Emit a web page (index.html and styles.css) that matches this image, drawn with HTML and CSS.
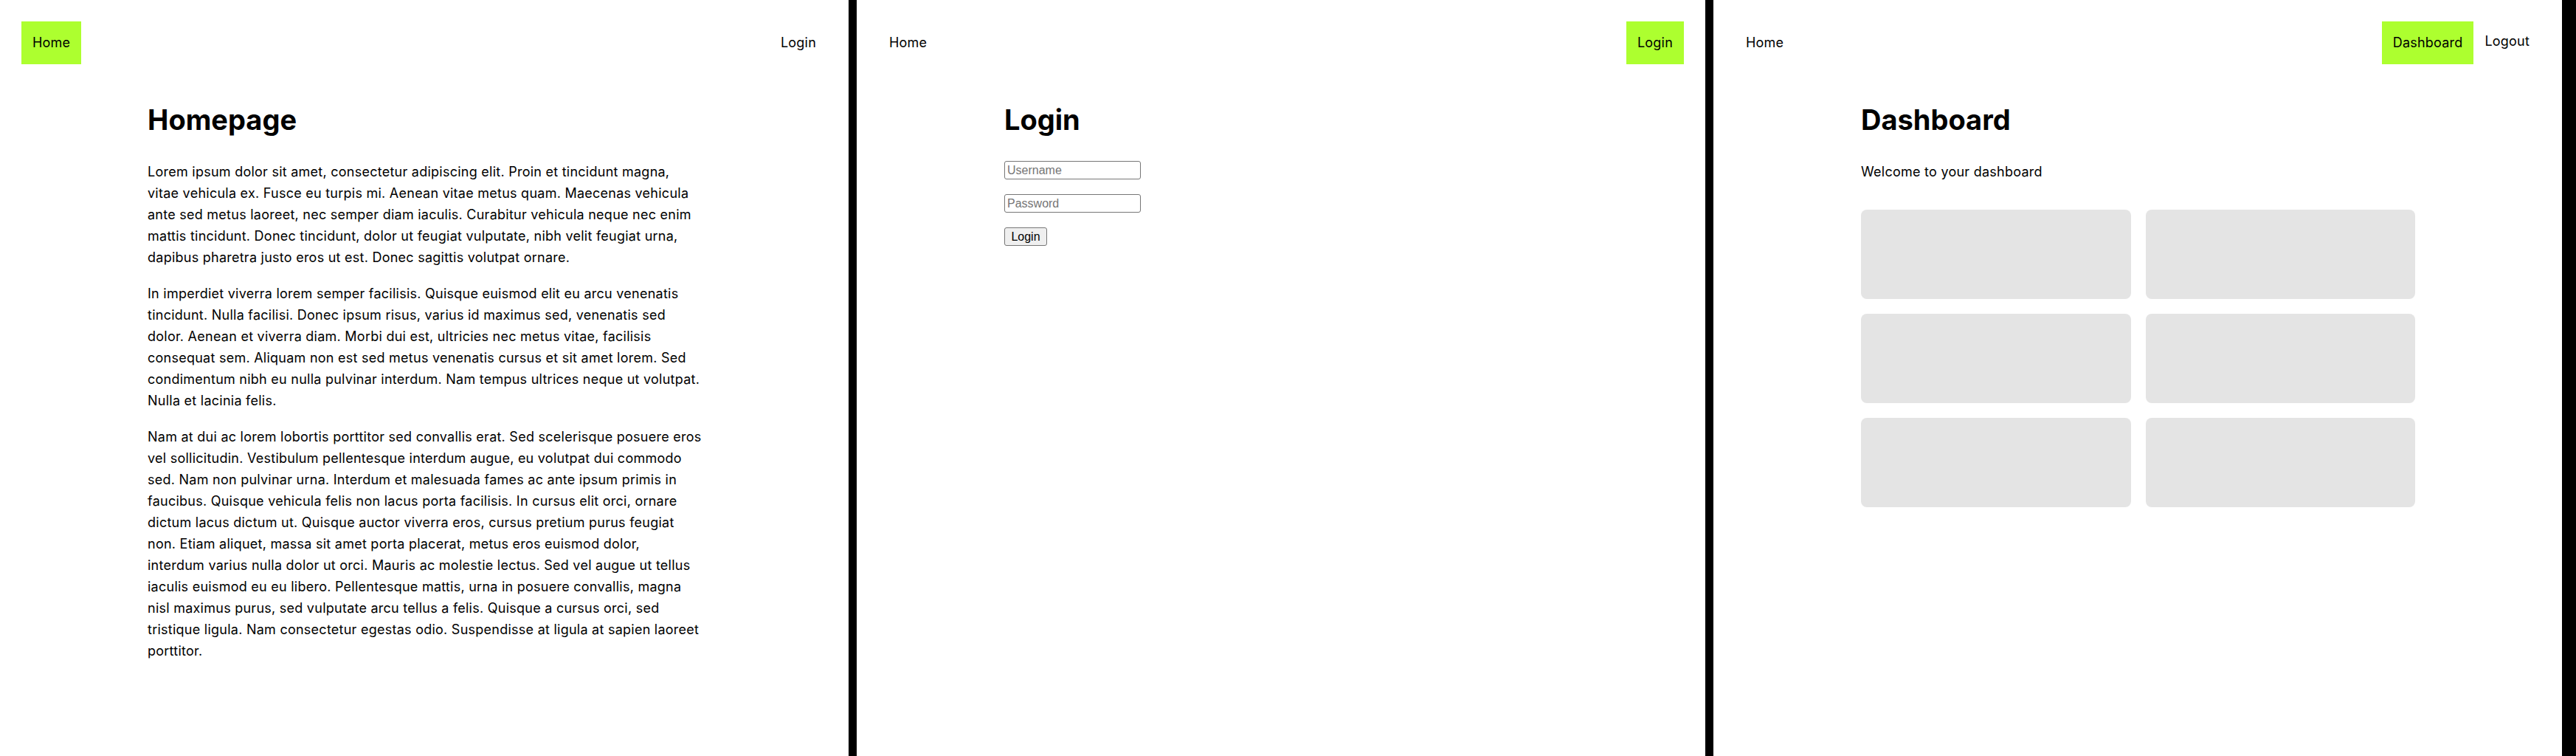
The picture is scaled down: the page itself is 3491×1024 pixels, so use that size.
FILE: index.html
```html
<!DOCTYPE html>
<html lang="en">
<head>
<meta charset="utf-8">
<title>Pages</title>
<link rel="stylesheet" href="styles.css">
</head>
<body>
  <section class="panel">
    <nav class="nav">
      <div class="nav-group"><a class="nav-link active" href="#">Home</a></div>
      <div class="nav-group"><a class="nav-link" href="#">Login</a></div>
    </nav>
    <main class="content">
      <h1 class="title">Homepage</h1>
      <p class="text">Lorem ipsum dolor sit amet, consectetur adipiscing elit. Proin et tincidunt magna, vitae vehicula ex. Fusce eu turpis mi. Aenean vitae metus quam. Maecenas vehicula ante sed metus laoreet, nec semper diam iaculis. Curabitur vehicula neque nec enim mattis tincidunt. Donec tincidunt, dolor ut feugiat vulputate, nibh velit feugiat urna, dapibus pharetra justo eros ut est. Donec sagittis volutpat ornare.</p>
      <p class="text">In imperdiet viverra lorem semper facilisis. Quisque euismod elit eu arcu venenatis tincidunt. Nulla facilisi. Donec ipsum risus, varius id maximus sed, venenatis sed dolor. Aenean et viverra diam. Morbi dui est, ultricies nec metus vitae, facilisis consequat sem. Aliquam non est sed metus venenatis cursus et sit amet lorem. Sed condimentum nibh eu nulla pulvinar interdum. Nam tempus ultrices neque ut volutpat. Nulla et lacinia felis.</p>
      <p class="text">Nam at dui ac lorem lobortis porttitor sed convallis erat. Sed scelerisque posuere eros vel sollicitudin. Vestibulum pellentesque interdum augue, eu volutpat dui commodo sed. Nam non pulvinar urna. Interdum et malesuada fames ac ante ipsum primis in faucibus. Quisque vehicula felis non lacus porta facilisis. In cursus elit orci, ornare dictum lacus dictum ut. Quisque auctor viverra eros, cursus pretium purus feugiat non. Etiam aliquet, massa sit amet porta placerat, metus eros euismod dolor,<br>interdum varius nulla dolor ut orci. Mauris ac molestie lectus. Sed vel augue ut tellus iaculis euismod eu eu libero. Pellentesque mattis, urna in posuere convallis, magna nisl maximus purus, sed vulputate arcu tellus a felis. Quisque a cursus orci, sed tristique ligula. Nam consectetur egestas odio. Suspendisse at ligula at sapien laoreet porttitor.</p>
    </main>
  </section>

  <section class="panel">
    <nav class="nav">
      <div class="nav-group"><a class="nav-link" href="#">Home</a></div>
      <div class="nav-group"><a class="nav-link active" href="#">Login</a></div>
    </nav>
    <main class="content">
      <h1 class="title">Login</h1>
      <form class="login-form">
        <input class="field" type="text" placeholder="Username">
        <input class="field" type="password" placeholder="Password">
        <button class="submit" type="button">Login</button>
      </form>
    </main>
  </section>

  <section class="panel">
    <nav class="nav">
      <div class="nav-group"><a class="nav-link" href="#">Home</a></div>
      <div class="nav-group">
        <a class="nav-link active" href="#">Dashboard</a>
        <button class="nav-link logout" type="button">Logout</button>
      </div>
    </nav>
    <main class="content">
      <h1 class="title">Dashboard</h1>
      <p class="text welcome">Welcome to your dashboard</p>
      <div class="cards">
        <div class="card"></div>
        <div class="card"></div>
        <div class="card"></div>
        <div class="card"></div>
        <div class="card"></div>
        <div class="card"></div>
      </div>
    </main>
  </section>
</body>
</html>
```

FILE: styles.css
```css
* {
  box-sizing: border-box;
}

html, body {
  margin: 0;
  padding: 0;
}

body {
  background: #000;
  display: flex;
  gap: 11px;
  height: 1024px;
  overflow: hidden;
  font-family: Inter, "Noto Sans", sans-serif;
  color: #000;
}

.panel {
  flex: 0 0 1150px;
  height: 1024px;
  background: #fff;
}

.nav {
  display: flex;
  justify-content: space-between;
  align-items: center;
  padding: 29px;
}

.nav-group {
  display: flex;
  align-items: center;
}

.nav-link {
  display: block;
  padding: 15px;
  font-family: inherit;
  font-size: 18px;
  line-height: 28px;
  letter-spacing: 0.2px;
  color: #000;
  text-decoration: none;
}

.nav-link.active {
  background: #adff2f;
}

.logout {
  background: none;
  border: 0;
  margin: 0;
  padding: 13px 15px 17px;
  cursor: pointer;
}

.content {
  max-width: 752px;
  margin: 0 auto;
  padding-left: 1px;
}

.title {
  font-size: 38px;
  line-height: 46px;
  font-weight: 700;
  margin: 23px 0 33px;
}

.text {
  font-size: 18px;
  line-height: 29px;
  letter-spacing: 0.25px;
  margin: 0 0 20px;
}

.login-form {
  display: flex;
  flex-direction: column;
  align-items: flex-start;
  gap: 20px;
}

.field {
  width: 185px;
  height: 25px;
  padding: 1px 3px;
  border: 1px solid #767676;
  border-radius: 3px;
  font-family: "Liberation Sans", Arial, sans-serif;
  font-size: 16px;
  color: #000;
  background: #fff;
}

.field::placeholder {
  color: #757575;
}

.submit {
  width: 58px;
  height: 25px;
  padding: 0 6px;
  border: 1px solid #767676;
  border-radius: 3px;
  background: #efefef;
  font-family: "Liberation Sans", Arial, sans-serif;
  font-size: 16px;
  color: #000;
}

.welcome {
  margin: 0;
}

.cards {
  margin-top: 37px;
  display: grid;
  grid-template-columns: 1fr 1fr;
  gap: 20px;
}

.card {
  height: 121px;
  border-radius: 8px;
  background: #e4e4e4;
}
```
